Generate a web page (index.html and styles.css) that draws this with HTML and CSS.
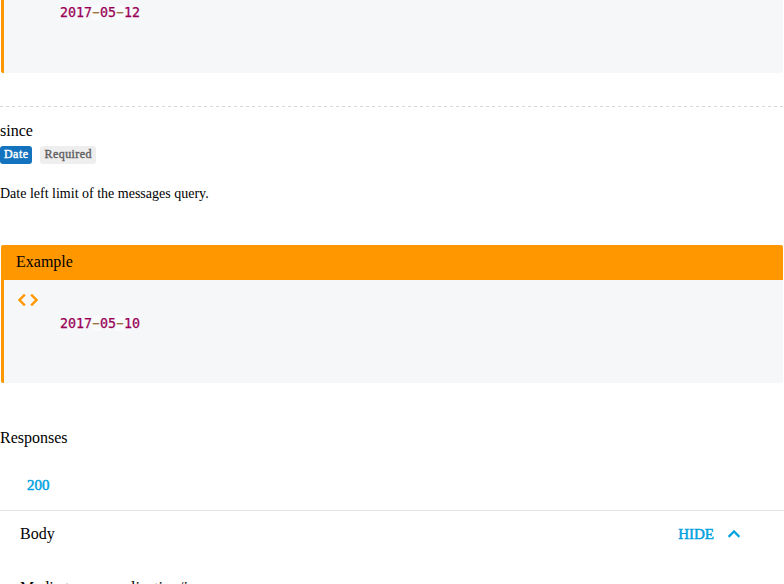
FILE: index.html
```html
<!DOCTYPE html>
<html lang="en">
<head>
<meta charset="utf-8">
<title>API documentation</title>
<link rel="stylesheet" href="styles.css">
</head>
<body>
<main>
  <section class="code-panel previous">
    <pre><b>2017</b><i><span>-</span></i><b>05</b><i><span>-</span></i><b>12</b></pre>
  </section>
  <section class="property">
    <div class="name">since</div>
    <div class="badges"><span class="badge type">Date</span><span class="badge required">Required</span></div>
    <p class="description">Date left limit of the messages query.</p>
  </section>
  <section class="example">
    <div class="example-title">Example</div>
    <div class="code-panel">
      <svg class="code-icon" width="24" height="24" viewBox="0 0 24 24"><path d="M9.4 16.6L4.8 12l4.6-4.6L8 6l-6 6 6 6 1.4-1.4zm5.2 0l4.600-4.600-4.600-4.600L16 6l6 6-6 6-1.400-1.400z"/></svg>
      <pre><b>2017</b><i><span>-</span></i><b>05</b><i><span>-</span></i><b>10</b></pre>
    </div>
  </section>
  <h2 class="responses">Responses</h2>
  <div class="tabs"><span class="tab">200</span></div>
  <div class="body-row">
    <span>Body</span>
    <span class="toggle">HIDE<svg width="24" height="24" viewBox="0 0 24 24"><path d="M12 8l-6 6 1.410 1.410L12 10.830l4.590 4.580L18 14z"/></svg></span>
  </div>
  <div class="media"><span>Media type:</span><span>application/json</span></div>
</main>
</body>
</html>
```
FILE: styles.css
```css
html, body { height: 100%; }
body {
  margin: 0;
  overflow: hidden;
  background: #fff;
  color: #000;
  font: 16px/20px "Liberation Serif", serif;
}
main { height: 584px; overflow: hidden; }
.code-panel {
  box-sizing: border-box;
  background: #f5f7f9;
  border-left: 3px solid #ff9800;
  border-radius: 0 0 2px 2px;
}
.previous { height: 73px; margin: 0 1px; padding-top: 3px; }
pre {
  margin: 0;
  padding-left: 56px;
  font: 13.3px/20px "DejaVu Sans Mono", monospace;
}
pre b { color: #905; font-weight: 400; -webkit-text-stroke: .25px #905; }
pre i { color: #9a6e3a; font-style: normal; background: rgba(255, 255, 255, .5); }
pre i span { display: inline-block; transform: scaleX(1.8); -webkit-text-stroke: .2px #9a6e3a; }
.property {
  margin-top: 33px;
  height: 139px;
  box-sizing: border-box;
  background: repeating-linear-gradient(90deg, #d5d8da 0 3px, transparent 3px 6px) 0 0 / 100% 1px no-repeat;
  padding-top: 15px;
}
.badges { display: flex; gap: 8px; margin-top: 5px; }
.badge {
  height: 18px;
  box-sizing: border-box;
  padding: 0 4px;
  border-radius: 3px;
  font-size: 12px;
  letter-spacing: .45px;
  line-height: 17px;
  -webkit-text-stroke: .4px currentColor;
}
.type { background: #1473bf; color: #fff; }
.required { background: #eee; color: #616161; }
.description { margin: 20px 0 0; font-size: 14px; }
.example { margin: 0 1px; }
.example-title {
  height: 35px;
  padding-left: 15px;
  line-height: 34px;
  background: #ff9800;
  border-radius: 2px 2px 0 0;
}
.example .code-panel { height: 103px; padding-top: 8px; }
.code-icon { display: block; margin: 0 0 2px 12px; fill: #ff9800; stroke: #ff9800; stroke-width: .5; }
.responses { margin: 45px 0 0; font-size: 16px; font-weight: 400; }
.tabs { height: 62px; border-bottom: 1px solid #e5e5e5; color: #00a2df; }
.tab {
  display: inline-block;
  padding: 27px 0 0 27px;
  font-size: 15px;
  line-height: 20px;
  -webkit-text-stroke: .5px currentColor;
}
.body-row {
  display: flex;
  justify-content: space-between;
  align-items: center;
  height: 46px;
  padding: 0 38px 2px 20px;
}
.toggle {
  display: flex;
  align-items: center;
  gap: 8px;
  color: #00a2df;
  font-size: 15px;
  -webkit-text-stroke: .5px currentColor;
}
.toggle svg { fill: #00a2df; stroke: #00a2df; stroke-width: .4; }
.media { display: flex; gap: 11px; padding: 19px 20px 0; }
```
